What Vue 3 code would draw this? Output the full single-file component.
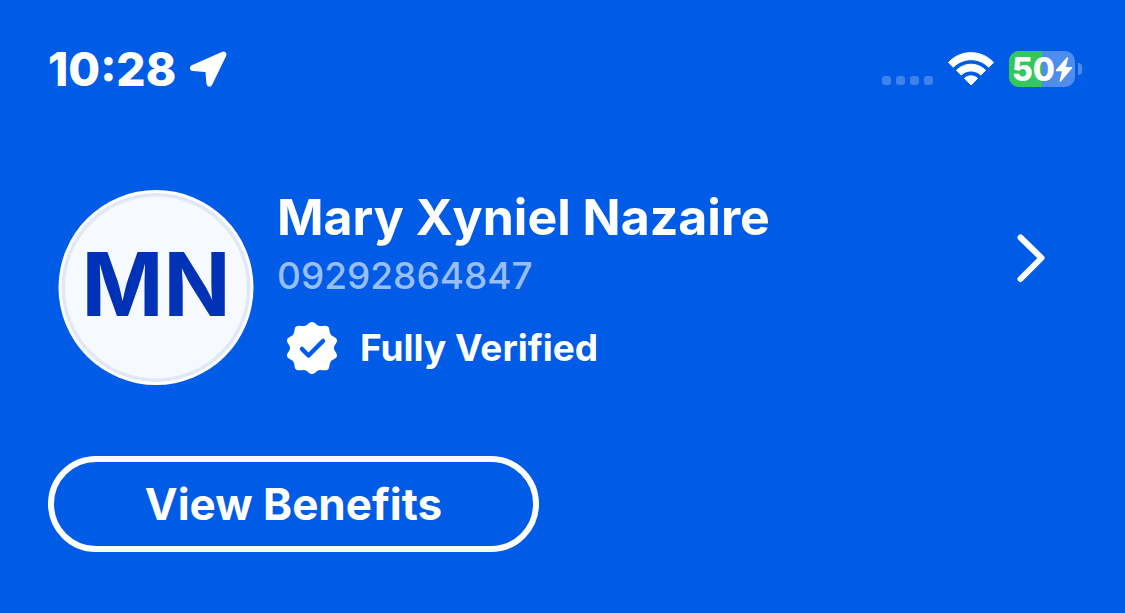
<script setup>
const user = {
  initials: 'MN',
  name: 'Mary Xyniel Nazaire',
  phone: '09292864847',
  status: 'Fully Verified',
}
const battery = 50
</script>

<template>
  <main class="screen">
    <header class="status-bar">
      <time class="clock">10:28</time>
      <svg class="location" width="40" height="40" viewBox="0 0 40 40" aria-hidden="true">
        <path d="M34.5 5.5 L20.5 34.5 L19.2 20.2 L4 18.9 Z" fill="#fff" stroke="#fff" stroke-width="6" stroke-linejoin="round" />
      </svg>
      <div class="indicators">
        <div class="signal" aria-hidden="true">
          <i v-for="n in 4" :key="n"></i>
        </div>
        <svg class="wifi" width="46" height="36" viewBox="0 0 46 36" aria-hidden="true">
          <path d="M0.5 11.3 C13 -1.6 33 -1.6 45.5 11.3 L40.7 16.2 C31 6.2 15 6.2 5.3 16.2 Z" fill="#fff" stroke="#fff" stroke-width="1" stroke-linejoin="round" />
          <path d="M8.5 19.2 C16.5 11.2 29.5 11.2 37.5 19.2 L32.8 24 C27.3 18.6 18.7 18.6 13.2 24 Z" fill="#fff" stroke="#fff" stroke-width="1" stroke-linejoin="round" />
          <path d="M16.5 27.3 C20.3 24 25.7 24 29.5 27.3 L23 34 Z" fill="#fff" stroke="#fff" stroke-width="1" stroke-linejoin="round" />
        </svg>
        <div class="battery">
          <div class="cell">
            <span class="charge" :style="{ width: battery + '%' }"></span>
            <span class="percent">{{ battery }}</span>
            <svg class="bolt" width="18" height="26" viewBox="0 0 18 26" aria-hidden="true">
              <path d="M12.3 1 L1.5 13.5 H8 L5.3 24 L16.5 10.7 H10 Z" fill="#fff" stroke="#fff" stroke-width="1.5" stroke-linejoin="round" />
            </svg>
          </div>
          <span class="tip"></span>
        </div>
      </div>
    </header>

    <section class="profile">
      <svg class="avatar" width="196" height="196" viewBox="0 0 196 196" role="img" :aria-label="user.initials">
        <circle cx="98" cy="97.5" r="97.5" fill="#fff" />
        <circle cx="98" cy="97.5" r="94.5" fill="#e0e8f8" />
        <circle cx="98" cy="97.5" r="91" fill="#f6f9fe" />
        <text class="initials" x="98" y="126" text-anchor="middle">{{ user.initials }}</text>
      </svg>
      <div class="info">
        <h1 class="name">{{ user.name }}</h1>
        <p class="phone">{{ user.phone }}</p>
        <p class="verified">
          <svg width="52" height="54" viewBox="0 0 52 54" aria-hidden="true">
            <path d="M26 1 C29.5 1 30.5 5 34 5 C37.5 5 40 4 42 5.5 C44 7.2 43 10.5 44.5 13 C46 15.8 50.5 16 51 19 C51.5 22 48 23.8 48 27 C48 30.2 51.5 32 51 35 C50.5 38 46 38.2 44.5 41 C43 43.5 44 46.8 42 48.5 C40 50 37.5 49 34 49 C30.5 49 29.5 53 26 53 C22.5 53 21.5 49 18 49 C14.5 49 12 50 10 48.5 C8 46.8 9 43.5 7.5 41 C6 38.2 1.5 38 1 35 C0.5 32 4 30.2 4 27 C4 23.8 0.5 22 1 19 C1.5 16 6 15.8 7.5 13 C9 10.5 8 7.2 10 5.5 C12 4 14.5 5 18 5 C21.5 5 22.5 1 26 1 Z" fill="#fff" />
            <path d="M16 28 L22.5 34.5 L37 20" fill="none" stroke="#005ce6" stroke-width="4.5" stroke-linecap="round" stroke-linejoin="round" />
          </svg>
          <span>{{ user.status }}</span>
        </p>
      </div>
      <button class="open" type="button" aria-label="Open profile">
        <svg width="32" height="52" viewBox="0 0 32 52" aria-hidden="true">
          <path d="M5.5 5.5 L26.5 26 L5.5 47" fill="none" stroke="#fff" stroke-width="6" stroke-linecap="round" stroke-linejoin="round" />
        </svg>
      </button>
    </section>

    <button class="benefits" type="button">View Benefits</button>
  </main>
</template>

<style>
body {
  margin: 0;
  background: #005ce6;
}
</style>

<style scoped>
.screen {
  box-sizing: border-box;
  min-height: 100vh;
  padding: 48px 43px 60px 48px;
  background: #005ce6;
  color: #fff;
  font-family: Inter, "Liberation Sans", sans-serif;
}
svg {
  display: block;
  flex: none;
}
button {
  margin: 0;
  font: inherit;
  color: inherit;
  background: none;
  cursor: pointer;
}
.status-bar {
  display: flex;
  align-items: center;
  height: 42px;
}
.clock {
  font-size: 46px;
  line-height: 42px;
  font-weight: 800;
}
.location {
  margin-left: 13px;
}
.indicators {
  display: flex;
  align-items: center;
  margin-left: auto;
}
.signal {
  display: flex;
  gap: 5px;
  margin: 22px 15px 0 0;
}
.signal i {
  width: 9px;
  height: 9px;
  border-radius: 3px;
  background: #3f82ec;
}
.battery {
  display: flex;
  align-items: center;
  gap: 3px;
  margin-left: 15px;
}
.cell {
  position: relative;
  display: flex;
  align-items: center;
  box-sizing: border-box;
  width: 66px;
  height: 36px;
  padding: 2px 0 0 3px;
  border-radius: 10px;
  background: #4c8dee;
}
.charge {
  position: absolute;
  inset: 0 auto 0 0;
  border-radius: 10px 0 0 10px;
  background: #34c759;
}
.percent {
  position: relative;
  font-size: 32px;
  line-height: 36px;
  font-weight: 800;
}
.bolt {
  position: relative;
}
.tip {
  width: 4px;
  height: 12px;
  border-radius: 0 4px 4px 0;
  background: #4c8dee;
}
.profile {
  display: flex;
  align-items: flex-start;
  margin-top: 100px;
  padding: 0 35px 0 10px;
}
.initials {
  font-size: 88px;
  font-weight: 700;
  fill: #0032b8;
}
.info {
  flex: 1;
  margin-left: 23px;
}
.name,
.phone,
.verified {
  margin: 0;
}
.name {
  font-size: 50px;
  line-height: 54px;
  font-weight: 700;
}
.phone {
  margin-top: 10px;
  font-size: 37px;
  line-height: 44px;
  font-weight: 500;
  color: #99bef5;
}
.verified {
  display: flex;
  align-items: center;
  gap: 22px;
  margin: 23px 0 0 9px;
  font-size: 37px;
  line-height: 54px;
  font-weight: 700;
}
.open {
  margin-top: 42px;
  padding: 0;
  border: 0;
}
.benefits {
  display: block;
  width: 491px;
  max-width: 100%;
  height: 96px;
  margin-top: 70px;
  border: 6px solid #fff;
  border-radius: 48px;
  font-size: 44px;
  font-weight: 700;
}
</style>
